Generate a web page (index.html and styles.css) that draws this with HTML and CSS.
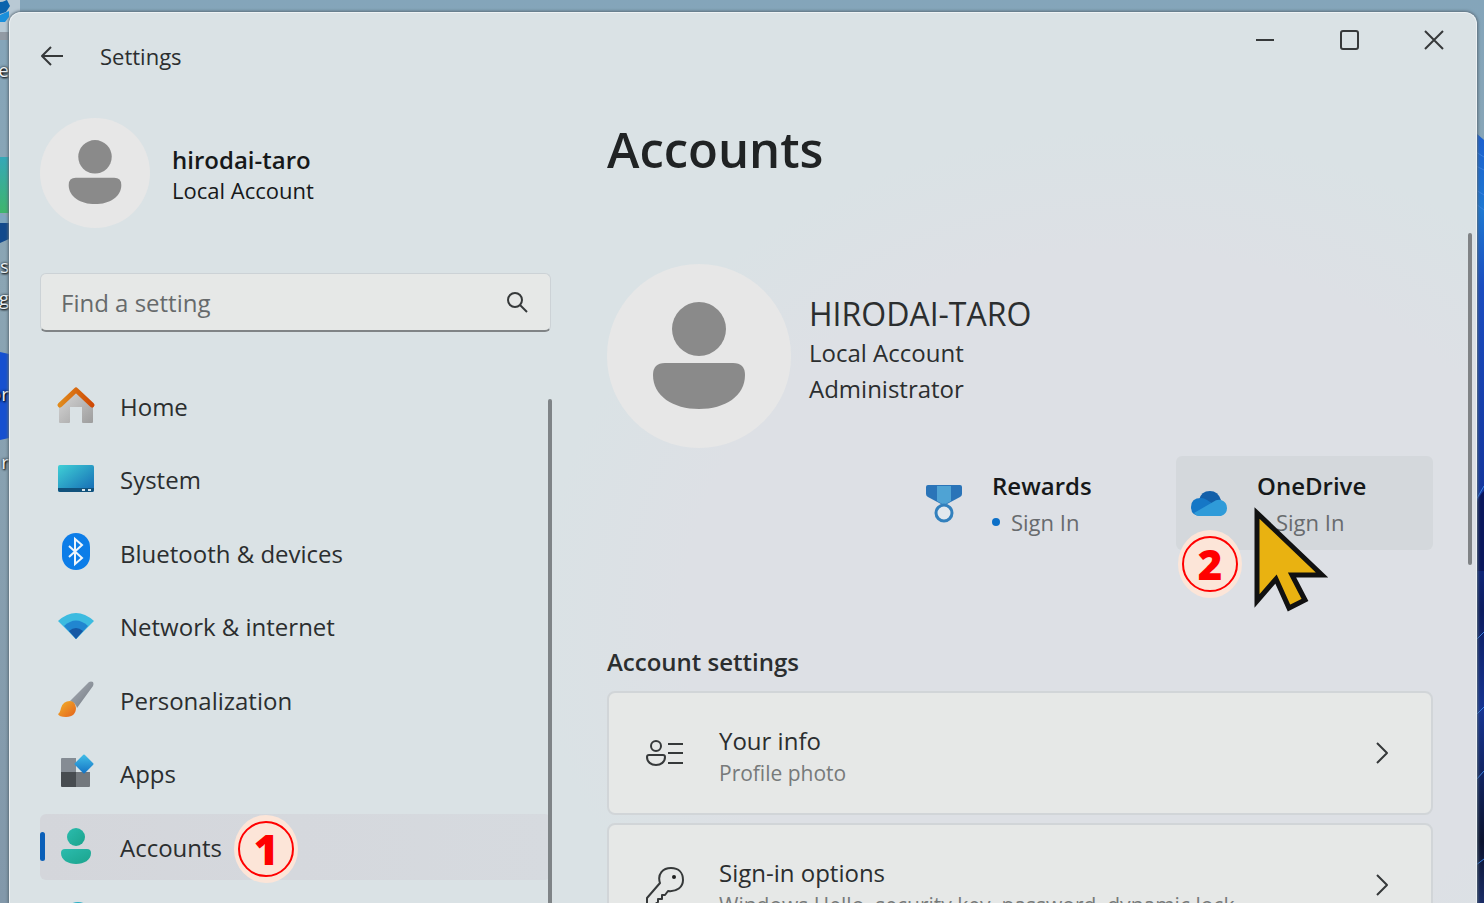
FILE: index.html
```html
<!DOCTYPE html>
<html lang="en">
<head>
<meta charset="utf-8">
<title>Settings</title>
<link rel="stylesheet" href="styles.css">
</head>
<body>
<div class="desktop">
  <svg class="wallpaper wallpaper-left" width="24" height="903" viewBox="0 0 24 903" aria-hidden="true">
    <defs>
      <linearGradient id="teal" x1="0" y1="0" x2="0" y2="1"><stop offset="0" stop-color="#35a8b8"/><stop offset="1" stop-color="#3fb56c"/></linearGradient>
    </defs>
    <path d="M0 0h20v14L9 36H0z" fill="#b9c9d4"/>
    <path d="M0 2c4 0 6-2 7-2l3 6-4 6-6 2z" fill="#0c63ad"/>
    <path d="M0 15l9-4v6l-4 5H0z" fill="#1a8fdc"/>
    <path d="M0 32h9v8H0z" fill="#929aa4"/>
    <path d="M0 157h9v56H0z" fill="url(#teal)"/>
    <path d="M0 213l9 5v8H0z" fill="#7fa6c0"/>
    <path d="M0 223h9v16l-9 4z" fill="#134a8c"/>
    <path d="M0 352l9 2v84l-9 2z" fill="#1650d0"/>
  </svg>
  <div class="shortcut-labels" aria-hidden="true">
    <span class="label-a">e</span><span class="label-b">s</span><span class="label-c">g</span><span class="label-d">or</span><span class="label-e">r</span>
  </div>
  <svg class="wallpaper wallpaper-right" width="8" height="903" viewBox="0 0 8 903" aria-hidden="true">
    <defs>
      <linearGradient id="bloom" x1="0" y1="0" x2="0" y2="1">
        <stop offset="0" stop-color="#1b5fd0"/><stop offset=".1" stop-color="#1e78d2"/><stop offset=".2" stop-color="#1a4cc0"/><stop offset=".5" stop-color="#123298"/><stop offset=".62" stop-color="#0c1c60"/><stop offset=".75" stop-color="#163492"/><stop offset=".92" stop-color="#0b122e"/><stop offset="1" stop-color="#1a2c66"/>
      </linearGradient>
    </defs>
    <path d="M0 133l8 7v763H0z" fill="url(#bloom)"/>
    <path d="M0 152l8 5M0 166l8 4M0 190l8 5M0 204l8 6M0 500l8-14M0 640l8-8M0 715l8-8M0 780l8-9M0 865l8-6" stroke="#3a80e0" stroke-width="1" fill="none"/>
    <path d="M0 505q3-10 8-14v80H0z" fill="#0a165c"/>
  </svg>

  <div class="window">
    <header class="titlebar">
      <button class="back" type="button" aria-label="Back">
        <svg width="24" height="20" viewBox="0 0 24 20"><path d="M23 10H2M11 1L2 10l9 9"/></svg>
      </button>
      <span class="app-title">Settings</span>
      <div class="window-controls">
        <button type="button" aria-label="Minimize"><svg width="20" height="20" viewBox="0 0 20 20"><path d="M0 10h18"/></svg></button>
        <button type="button" aria-label="Maximize"><svg width="20" height="20" viewBox="0 0 20 20"><rect x="1" y="1" width="17" height="18" rx="2"/></svg></button>
        <button type="button" aria-label="Close"><svg width="20" height="20" viewBox="0 0 20 20"><path d="M1 1l18 18M19 1L1 19"/></svg></button>
      </div>
    </header>

    <div class="columns">
      <aside class="sidebar">
        <div class="user">
          <svg class="avatar" viewBox="0 0 184 184"><circle cx="92" cy="92" r="92" fill="#e7e7e7"/><circle cx="92" cy="65" r="28" fill="#8a8a8a"/><path d="M60 100h64q12 0 12 12c0 20-20 32-44 32s-44-12-44-32q0-12 12-12z" fill="#8a8a8a"/></svg>
          <div>
            <div class="user-name">hirodai-taro</div>
            <div class="user-type">Local Account</div>
          </div>
        </div>
        <div class="search">
          <input type="text" placeholder="Find a setting" aria-label="Find a setting">
          <svg width="22" height="22" viewBox="0 0 22 22"><circle cx="9" cy="9" r="7"/><path d="M14 14l7 7"/></svg>
        </div>
        <nav class="nav" aria-label="Settings categories">
          <a class="nav-item" href="#home">
            <svg width="40" height="40" viewBox="0 0 40 40"><defs><linearGradient id="wall" x1="0" y1="0" x2="1" y2="1"><stop offset="0" stop-color="#dadada"/><stop offset="1" stop-color="#9d9d9d"/></linearGradient><linearGradient id="roof"><stop offset="0" stop-color="#e08a1c"/><stop offset="1" stop-color="#cf4a05"/></linearGradient></defs><path d="M3 18L20 4l17 14v18q0 1-1 1h-9q-1 0-1-1V21H14v15q0 1-1 1H4q-1 0-1-1z" fill="url(#wall)"/><path d="M4 19L20 4l16 15" fill="none" stroke="url(#roof)" stroke-width="5" stroke-linecap="round" stroke-linejoin="round"/></svg>
            Home</a>
          <a class="nav-item" href="#system">
            <svg width="40" height="40" viewBox="0 0 40 40"><defs><linearGradient id="screen" x1="0" y1="0" x2="1" y2="1"><stop offset="0" stop-color="#3fd0d6"/><stop offset="1" stop-color="#1468b4"/></linearGradient></defs><rect x="2" y="5" width="36" height="27" rx="2" fill="url(#screen)"/><path d="M2 28h36v2q0 2-2 2H4q-2 0-2-2z" fill="#11527c"/><path d="M26 30h3M32 30h3" stroke="#d5e6ee" stroke-width="2"/></svg>
            System</a>
          <a class="nav-item" href="#bluetooth">
            <svg width="40" height="40" viewBox="0 0 40 40"><rect x="6" y="0" width="28" height="37" rx="14" fill="#0c7de8"/><path d="M13 13l13 12-7 6V6l7 6-13 12" fill="none" stroke="#eef5fb" stroke-width="2"/></svg>
            Bluetooth &amp; devices</a>
          <a class="nav-item" href="#network">
            <svg width="40" height="40" viewBox="0 0 40 40"><path d="M2 14Q20-2 38 14L20 32z" fill="#3cbbe0"/><path d="M8 19q12-11 24 0L20 32z" fill="#2186d0"/><path d="M13 24q7-6 14 0l-7 8z" fill="#1658a4"/></svg>
            Network &amp; internet</a>
          <a class="nav-item" href="#personalization">
            <svg width="40" height="40" viewBox="0 0 40 40"><defs><linearGradient id="brush" x1="0" y1="0" x2="1" y2="1"><stop offset="0" stop-color="#f2b32a"/><stop offset="1" stop-color="#e4621c"/></linearGradient><linearGradient id="handle" x1="0" y1="0" x2="1" y2="1"><stop offset="0" stop-color="#aab0b8"/><stop offset="1" stop-color="#727981"/></linearGradient></defs><path d="M14 21L33 2q2-1 4 0 1 2 0 4L21 28q-1-5-7-7z" fill="url(#handle)"/><path d="M14 21q-7 0-9 7-1 5-3 6 1 3 8 3c7 0 10-4 10-9q-1-7-6-7z" fill="url(#brush)"/></svg>
            Personalization</a>
          <a class="nav-item" href="#apps">
            <svg width="40" height="40" viewBox="0 0 40 40"><defs><linearGradient id="tile" x1="0" y1="0" x2="1" y2="1"><stop offset="0" stop-color="#42bfe8"/><stop offset="1" stop-color="#1372c4"/></linearGradient></defs><path d="M6 4h14v14H5V5q0-1 1-1z" fill="#858c94"/><path d="M5 18h15v15H6q-1 0-1-1z" fill="#474c50"/><path d="M20 18h14v14q0 1-1 1H20z" fill="#73787d"/><rect x="21" y="3" width="14" height="14" rx="1" transform="rotate(45 28 10)" fill="url(#tile)"/></svg>
            Apps</a>
          <a class="nav-item selected" href="#accounts" aria-current="page">
            <svg width="40" height="40" viewBox="0 0 40 40"><defs><linearGradient id="person" x1="0" y1="0" x2="1" y2="1"><stop offset="0" stop-color="#2bbcae"/><stop offset="1" stop-color="#1ba38c"/></linearGradient></defs><circle cx="20" cy="10" r="9" fill="url(#person)"/><path d="M9 22h22q4 0 4 4c0 7-7 11-15 11S5 33 5 26q0-4 4-4z" fill="url(#person)"/></svg>
            Accounts
            <span class="step">1</span></a>
          <a class="nav-item" href="#time" aria-label="Time and language">
            <svg width="40" height="40" viewBox="0 0 40 40"><circle cx="22" cy="15" r="14" fill="#27aec4"/></svg></a>
        </nav>
        <div class="nav-scroll"></div>
      </aside>

      <main class="content">
        <h1>Accounts</h1>
        <section class="profile">
          <svg class="avatar avatar-large" viewBox="0 0 184 184"><circle cx="92" cy="92" r="92" fill="#e7e7e7"/><circle cx="92" cy="65" r="27" fill="#8a8a8a"/><path d="M58 99h68q12 0 12 12c0 21-20 34-46 34s-46-13-46-34q0-12 12-12z" fill="#8a8a8a"/></svg>
          <div class="profile-text">
            <div class="profile-name">HIRODAI-TARO</div>
            <div class="profile-line">Local Account</div>
            <div class="profile-line">Administrator</div>
          </div>
        </section>
        <section class="services">
          <button class="service" type="button">
            <svg width="40" height="40" viewBox="0 0 40 40"><path d="M4 2h32q2 0 2 2v7q0 2-2 3l-13 7h-6L4 14q-2-1-2-3V4q0-2 2-2z" fill="#2a74b8"/><path d="M13 3h14v15l-7 4-7-4z" fill="#4fa3d4"/><circle cx="20" cy="30" r="8" fill="#e1e8ee" stroke="#3280bd" stroke-width="3"/></svg>
            <span class="service-text"><span class="service-name">Rewards</span><span class="service-state">Sign In</span></span>
          </button>
          <button class="service hovered" type="button">
            <svg width="40" height="40" viewBox="0 0 40 40"><path d="M10 17Q12 8 21 8q8 0 11 9l-10 9z" fill="#125fa9"/><path d="M2 24q0-9 10-9 3 0 6 2l14 9-20 7Q2 33 2 24z" fill="#1577c6"/><path d="M5 30l19-11q4-3 8-2 6 2 6 8t-6 8H11q-4 0-6-3z" fill="#2f9bd9"/></svg>
            <span class="service-text"><span class="service-name">OneDrive</span><span class="service-state">Sign In</span></span>
            <span class="step">2</span>
            <svg class="pointer" width="76" height="106" viewBox="0 0 76 106"><path d="M4 7v88l19-22 13 29 16-8-13-25h30z" fill="#e9b211" stroke="#111" stroke-width="5"/></svg>
          </button>
        </section>
        <h2>Account settings</h2>
        <div class="cards">
          <button class="card" type="button">
            <svg width="40" height="40" viewBox="0 0 40 40"><circle cx="11" cy="13" r="5"/><path d="M4 22h14q2 0 2 2c0 5-4 8-9 8s-9-3-9-8q0-2 2-2zM23 11h15M23 20h15M23 30h15"/></svg>
            <span class="card-text"><span class="card-name">Your info</span><span class="card-note">Profile photo</span></span>
            <svg width="14" height="22" viewBox="0 0 14 22"><path d="M2 1l10 10L2 21"/></svg>
          </button>
          <button class="card" type="button">
            <svg width="40" height="40" viewBox="0 0 40 40"><path d="M15 18C12 9 18 3 26 3s12 5 12 12-6 12-15 11l-3 4h-3v4h-4v3l-4 3H4q-2 0-2-2v-5z"/><circle cx="29" cy="12" r="2" fill="#1f1f1f" stroke="none"/></svg>
            <span class="card-text"><span class="card-name">Sign-in options</span><span class="card-note">Windows Hello, security key, password, dynamic lock</span></span>
            <svg width="14" height="22" viewBox="0 0 14 22"><path d="M2 1l10 10L2 21"/></svg>
          </button>
        </div>
      </main>
      <div class="page-scroll"></div>
    </div>
  </div>
</div>
</body>
</html>
```
FILE: styles.css
```css
* { box-sizing: border-box; }

body {
  margin: 0;
  height: 100vh;
  overflow: hidden;
  background: #fff;
  color: #2b2e2f;
  font-family: "Open Sans", "Noto Sans", sans-serif;
  font-size: 24px;
}

button {
  font: inherit;
  color: inherit;
  background: none;
  border: 0;
  padding: 0;
  text-align: left;
}

svg { display: block; flex: none; }

/* Desktop behind the window */
.desktop {
  position: relative;
  display: flex;
  height: calc(100vh - 17px);
  padding: 12px 7px 0 9px;
  overflow: hidden;
  background: linear-gradient(#84a5ba, #8ba5b4 30%, #8298aa);
}
.wallpaper { position: absolute; top: 0; }
.wallpaper-left { left: 0; }
.wallpaper-right { right: 0; }
.shortcut-labels {
  position: absolute;
  inset: 0 auto 0 0;
  width: 9px;
  overflow: hidden;
  color: #eef2f5;
  font-size: 19px;
  line-height: 24px;
  text-shadow: 0 0 3px #000, 1px 1px 2px #000;
}
.shortcut-labels span { position: absolute; right: 0; }
.label-a { top: 58px; }
.label-b { top: 254px; }
.label-c { top: 286px; }
.label-d { top: 382px; }
.label-e { top: 450px; }

/* Window */
.window {
  position: relative;
  flex: 1;
  display: flex;
  flex-direction: column;
  min-width: 0;
  border: 1px solid #eef2f4;
  border-bottom: 0;
  border-radius: 12px 12px 0 0;
  background: radial-gradient(ellipse 40% 55% at 76% 68%, #dde0e5 75%, #dae2e5 100%);
  box-shadow: 0 0 3px 1px #5c6c78;
}
.titlebar {
  display: flex;
  align-items: center;
  height: 85px;
  padding: 0 26px 0 30px;
}
.back svg, .window-controls svg, .search svg, .card svg {
  fill: none;
  stroke: #36393a;
  stroke-width: 2;
  stroke-linejoin: round;
}
.app-title { margin-left: 36px; font-size: 22px; line-height: 30px; }
.window-controls {
  display: flex;
  gap: 64px;
  align-self: flex-start;
  margin: 17px 6px 0 auto;
}

.columns { flex: 1; display: flex; min-height: 0; }

/* Sidebar */
.sidebar { position: relative; width: 541px; padding: 20px 0 0 30px; }
.user { display: flex; align-items: center; gap: 22px; margin-bottom: 45px; line-height: 31px; color: #161819; }
.user > div { padding-top: 4px; }
.avatar { width: 110px; height: 110px; }
.user-name { font-weight: 600; }
.user-type { font-size: 22px; }
.search {
  display: flex;
  align-items: center;
  height: 59px;
  padding: 0 22px 0 20px;
  border: 1px solid #ccd2d6;
  border-bottom: 2px solid #808486;
  border-radius: 6px;
  background: #e6e8e7;
}
.search input {
  flex: 1;
  min-width: 0;
  padding: 0;
  border: 0;
  outline: 0;
  background: none;
  font: inherit;
}
.search input::placeholder { color: #666a6b; opacity: 1; }
.nav {
  display: flex;
  flex-direction: column;
  justify-content: space-between;
  height: 581px;
  margin-top: 41px;
}
.nav-item {
  position: relative;
  display: flex;
  align-items: center;
  gap: 24px;
  height: 66px;
  padding-left: 16px;
  border-radius: 6px;
  color: inherit;
  text-decoration: none;
}
.nav-item.selected { background: linear-gradient(90deg, #d4d6db, #d6dadf); }
.nav-item.selected::before {
  content: "";
  position: absolute;
  left: 0;
  top: 18px;
  width: 5px;
  height: 29px;
  border-radius: 3px;
  background: #0a5fb8;
}
.nav-scroll {
  position: absolute;
  right: -1px;
  top: 301px;
  bottom: 0;
  width: 4px;
  border-radius: 2px 2px 0 0;
  background: #7f8487;
}

/* Numbered step markers */
.step {
  position: absolute;
  display: grid;
  place-items: center;
  width: 64px;
  height: 68px;
  border-radius: 50%;
  background: #fce5d8;
  color: #f00;
  font-family: "Noto Sans", "Open Sans", sans-serif;
  font-size: 42px;
  font-weight: 900;
  line-height: 56px;
}
.step::after {
  content: "";
  position: absolute;
  inset: 6px 4px;
  border: 2px solid #f00;
  border-radius: 50%;
}
.nav-item .step { left: 194px; top: 1px; }
.service .step { left: 2px; top: 74px; }

/* Content */
.content { flex: 1; min-width: 0; padding: 20px 0 0 56px; }
h1 { margin: 0 0 84px; font-size: 49px; line-height: 62px; font-weight: 600; color: #202324; }
.profile { display: flex; align-items: center; gap: 18px; }
.profile-text { padding-bottom: 13px; }
.avatar-large { width: 184px; height: 184px; }
.profile-name { font-size: 32px; line-height: 42px; }
.profile-line { line-height: 36px; }
.services { display: flex; justify-content: flex-end; gap: 8px; margin-top: 8px; }
.service {
  position: relative;
  display: flex;
  align-items: center;
  gap: 28px;
  width: 257px;
  height: 94px;
  padding-left: 13px;
  border-radius: 6px;
}
.service.hovered { background: #d4d8dc; }
.service-text, .card-text { display: flex; flex-direction: column; }
.service-name { font-weight: 600; line-height: 38px; color: #161819; }
.service-state { display: flex; align-items: center; gap: 11px; font-size: 22px; line-height: 34px; color: #686b6e; }
.service-state::before { content: ""; width: 8px; height: 8px; border-radius: 50%; background: #0c70c8; }
.pointer { position: absolute; left: 77px; top: 50px; }

h2 { margin: 95px 0 12px; font-size: 24px; line-height: 34px; font-weight: 600; }
.cards { display: flex; flex-direction: column; gap: 8px; }
.card {
  display: flex;
  align-items: center;
  gap: 34px;
  height: 124px;
  padding: 0 42px 0 36px;
  border: 2px solid #d1d5d8;
  border-radius: 8px;
  background: #e6e8e7;
}
.card-text { flex: 1; padding-top: 5px; }
.card-name { line-height: 34px; }
.card-note { font-size: 21px; line-height: 30px; color: #777a7a; }
.page-scroll {
  width: 4px;
  height: 332px;
  margin: 135px 4px 0 35px;
  border-radius: 2px;
  background: #808386;
}
```
